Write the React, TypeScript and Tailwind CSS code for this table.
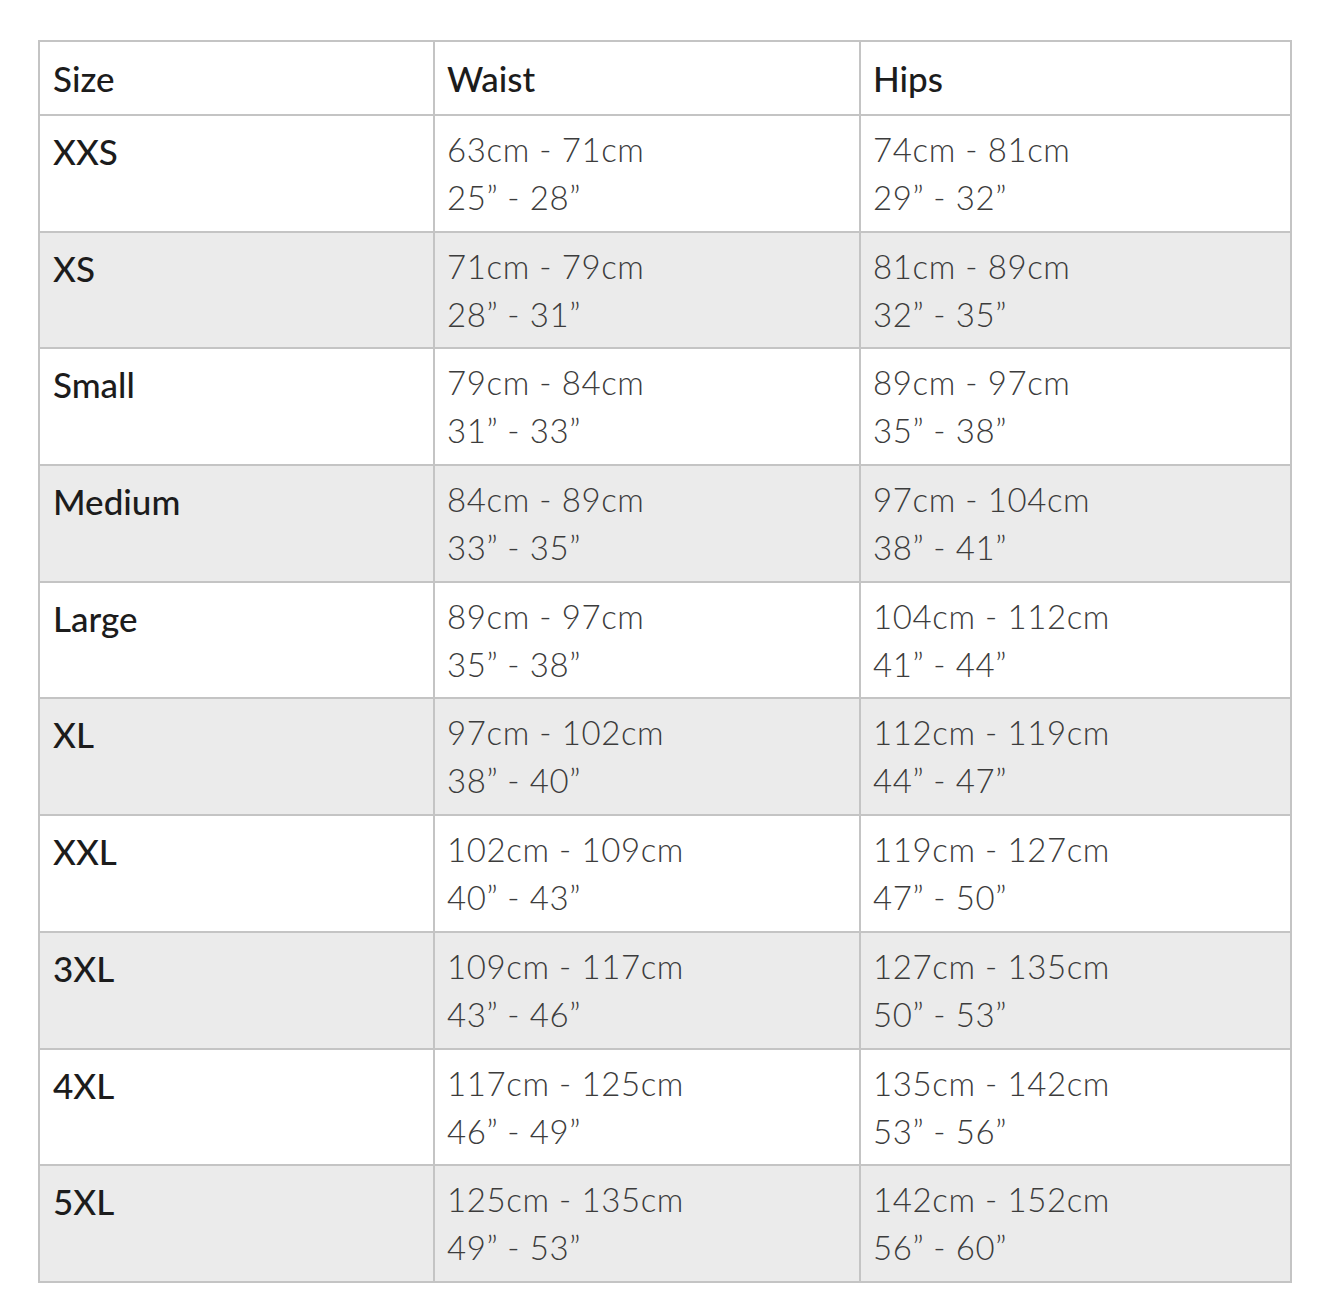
const ROWS: { size: string; waist: [string, string]; hips: [string, string] }[] = [
  { size: 'XXS', waist: ['63cm - 71cm', '25” - 28”'], hips: ['74cm - 81cm', '29” - 32”'] },
  { size: 'XS', waist: ['71cm - 79cm', '28” - 31”'], hips: ['81cm - 89cm', '32” - 35”'] },
  { size: 'Small', waist: ['79cm - 84cm', '31” - 33”'], hips: ['89cm - 97cm', '35” - 38”'] },
  { size: 'Medium', waist: ['84cm - 89cm', '33” - 35”'], hips: ['97cm - 104cm', '38” - 41”'] },
  { size: 'Large', waist: ['89cm - 97cm', '35” - 38”'], hips: ['104cm - 112cm', '41” - 44”'] },
  { size: 'XL', waist: ['97cm - 102cm', '38” - 40”'], hips: ['112cm - 119cm', '44” - 47”'] },
  { size: 'XXL', waist: ['102cm - 109cm', '40” - 43”'], hips: ['119cm - 127cm', '47” - 50”'] },
  { size: '3XL', waist: ['109cm - 117cm', '43” - 46”'], hips: ['127cm - 135cm', '50” - 53”'] },
  { size: '4XL', waist: ['117cm - 125cm', '46” - 49”'], hips: ['135cm - 142cm', '53” - 56”'] },
  { size: '5XL', waist: ['125cm - 135cm', '49” - 53”'], hips: ['142cm - 152cm', '56” - 60”'] },
]

const cols = 'grid grid-cols-[393px_426px_1fr]'

function Values({ lines }: { lines: [string, string] }) {
  return (
    <div className="border-l-2 border-[#c4c4c4] px-[12px] pt-[9px] text-[33px] leading-[48px] text-[#3c3c3c] font-light tracking-[0.6px]">
      <div>{lines[0]}</div>
      <div>{lines[1]}</div>
    </div>
  )
}

export default function App() {
  return (
    <div className="min-h-[1297px] bg-white pl-[38px] pt-[40px] font-['Lato','Open_Sans',sans-serif]">
      <div className="w-[1254px] border-2 border-[#c4c4c4]">
        {/* header */}
        <div className={`${cols} h-[72px] text-[35px] font-medium text-[#1c1c1c]`}>
          <div className="px-[13px] pt-[10px]">Size</div>
          <div className="border-l-2 border-[#c4c4c4] px-[12px] pt-[10px]">Waist</div>
          <div className="border-l-2 border-[#c4c4c4] px-[12px] pt-[10px]">Hips</div>
        </div>

        {ROWS.map((r, i) => (
          <div
            key={r.size}
            className={`${cols} h-[116.7px] border-t-2 border-[#c4c4c4] ${i % 2 === 1 ? 'bg-[#ebebeb]' : 'bg-white'}`}
          >
            <div className="px-[13px] pt-[9px] text-[35px] font-medium text-[#1c1c1c]">{r.size}</div>
            <Values lines={r.waist} />
            <Values lines={r.hips} />
          </div>
        ))}
      </div>
    </div>
  )
}
